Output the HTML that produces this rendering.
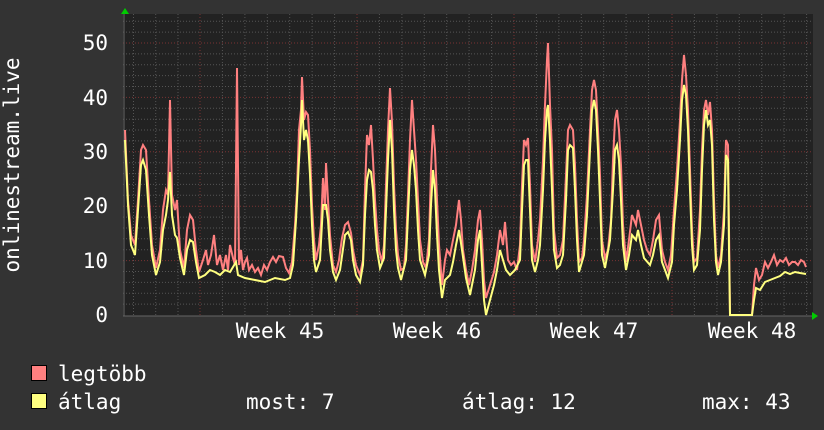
<!DOCTYPE html>
<html><head><meta charset="utf-8"><style>
html,body{margin:0;padding:0;background:#333;}
svg{display:block}
text{font-family:"DejaVu Sans Mono","Liberation Mono",monospace;font-size:21px;fill:#fff}
</style></head><body>
<svg width="824" height="430" viewBox="0 0 824 430" xmlns="http://www.w3.org/2000/svg">
<rect width="824" height="430" fill="#333"/>
<rect x="123" y="14" width="690" height="302" fill="#222"/>
<g stroke="#555" stroke-width="1" stroke-dasharray="1,2">
<path d="M123 304.1H811M123 293.2H811M123 282.4H811M123 271.5H811M123 249.7H811M123 238.8H811M123 228H811M123 217.1H811M123 195.3H811M123 184.4H811M123 173.6H811M123 162.7H811M123 140.9H811M123 130H811M123 119.2H811M123 108.3H811M123 86.5H811M123 75.6H811M123 64.8H811M123 53.9H811M123 32.1H811M123 21.2H811"/>
<path d="M133.5 14V316M155.7 14V316M178 14V316M222.4 14V316M244.9 14V316M267.3 14V316M289.7 14V316M312.1 14V316M334.6 14V316M379.4 14V316M401.9 14V316M424.3 14V316M446.7 14V316M469.1 14V316M491.6 14V316M536.4 14V316M558.9 14V316M581.3 14V316M603.7 14V316M626.1 14V316M648.6 14V316M694.4 14V316M716.9 14V316M739.3 14V316M761.7 14V316M784.1 14V316M806.6 14V316"/>
</g>
<g stroke="#7a3333" stroke-width="1" stroke-dasharray="1,2">
<path d="M123 260.6H811M123 206.2H811M123 151.8H811M123 97.4H811M123 43H811"/>
<path d="M200 14V316M357 14V316M514 14V316M672 14V316"/>
</g>
<path d="M123 316H814M124 12V316" stroke="#666" stroke-width="1"/>
<path d="M121 14L125 8L129 14Z" fill="#0c0"/>
<path d="M812 312L818 316L812 320Z" fill="#0c0"/>
<polyline fill="none" stroke="#ff8080" stroke-width="2" points="125,130 128,200 131,235 135,245 138,200 141,150 143,145 146,150 149,200 152,245 156,268 160,250 163,210 166,190 168,195 170,100 172,195 175,210 177,200 180,250 184,268 187,230 190,215 193,220 196,250 199,272 203,260 206,250 208,265 211,255 214,235 217,265 220,255 223,270 226,255 228,270 230,245 233,258 235,265 237,68 239,265 241,250 243,270 245,262 247,258 249,270 252,265 255,272 258,268 261,275 264,265 267,270 270,262 273,257 276,262 279,256 283,257 286,268 289,273 292,262 295,225 297,190 299,130 301,110 302,77 304,120 306,112 308,115 310,150 312,205 314,240 316,260 319,245 321,225 323,178 325,210 326,163 328,200 330,235 333,265 336,272 339,260 342,238 345,225 348,222 351,233 353,250 356,265 360,275 363,260 365,190 367,135 369,145 371,125 373,160 375,200 377,230 379,250 382,262 384,245 386,185 388,130 390,88 392,122 394,185 396,230 398,255 401,270 404,268 406,245 408,195 410,140 412,100 414,130 416,160 418,200 420,240 423,262 426,268 429,240 431,170 433,125 435,150 437,200 439,245 442,285 445,260 447,250 450,255 453,240 456,225 459,200 461,220 463,250 466,270 469,285 472,270 475,250 478,220 480,210 482,240 484,280 486,298 490,285 494,272 497,255 500,230 503,245 505,222 508,260 511,265 514,262 517,270 520,245 522,185 524,140 526,145 528,138 530,185 532,245 535,262 538,240 540,220 543,160 545,105 547,60 548,43 550,105 552,150 554,230 557,258 560,255 563,240 566,175 568,130 570,125 573,130 575,165 577,220 579,262 582,258 584,240 587,195 590,130 592,90 594,80 596,90 598,130 600,175 602,240 605,258 608,250 611,220 613,160 615,120 617,110 619,130 621,165 623,225 626,262 629,240 632,215 636,225 638,210 641,225 644,240 647,250 650,255 653,240 656,220 659,215 662,250 665,262 668,270 671,255 674,210 677,170 680,120 682,80 684,55 686,75 688,110 690,170 692,230 694,262 697,258 700,210 702,150 704,110 706,100 708,115 710,102 712,130 714,200 716,255 718,268 721,255 724,210 726,140 728,145 729,230 730,315 752,315 754,285 756,268 759,280 762,275 765,262 768,268 771,262 774,255 777,265 780,260 783,262 786,258 789,265 792,262 795,262 798,265 801,260 804,262 806,267"/>
<polyline fill="none" stroke="#ffff80" stroke-width="2" points="125,140 128,205 131,245 135,255 138,210 141,165 143,160 146,170 149,215 152,255 156,275 160,262 163,230 166,215 168,200 170,172 172,215 175,235 177,238 180,258 184,275 187,250 190,240 193,242 196,262 199,278 205,275 210,270 215,272 220,275 225,270 230,272 236,262 238,275 245,278 255,280 265,282 275,278 285,280 290,278 293,265 296,220 299,160 301,125 302,100 304,140 306,130 308,140 310,175 312,225 314,260 316,272 320,260 323,205 326,205 328,220 330,250 333,272 336,280 340,270 345,235 348,232 351,240 353,260 356,275 360,282 363,265 365,215 367,180 369,170 371,172 373,190 375,225 377,250 380,268 384,258 386,210 388,160 390,120 392,150 394,210 396,250 398,268 401,280 406,260 408,215 410,170 412,150 414,165 416,190 418,230 420,260 425,275 429,255 431,205 433,170 435,190 437,235 439,270 442,298 445,280 450,275 453,262 456,245 459,230 462,250 466,278 470,295 475,270 478,240 480,230 482,265 484,300 486,315 490,300 494,285 497,270 500,250 503,260 506,270 510,275 515,270 520,260 522,210 524,165 526,160 528,160 530,210 532,260 535,272 538,260 540,245 543,190 545,140 547,110 548,105 550,140 552,190 554,250 557,268 560,265 563,255 566,200 568,150 570,145 573,148 575,190 577,240 579,272 584,255 587,215 590,150 592,110 594,100 596,110 598,150 600,200 602,255 605,268 610,240 613,190 615,150 617,145 619,160 621,200 623,245 626,270 629,255 632,235 636,240 638,230 641,245 644,258 650,265 653,255 656,240 659,235 662,262 668,278 672,262 674,225 677,190 680,140 682,100 684,85 686,95 688,130 690,190 692,245 694,270 697,265 700,230 702,170 704,125 706,110 708,125 710,120 712,145 714,220 716,262 718,275 721,262 724,225 726,155 728,160 729,250 730,315 752,315 754,300 756,288 760,290 765,282 770,280 775,278 780,276 785,272 790,274 795,272 800,273 806,274"/>
<g text-anchor="end">
<text x="108" y="322">0</text>
<text x="108" y="268">10</text>
<text x="108" y="213">20</text>
<text x="108" y="159">30</text>
<text x="108" y="105">40</text>
<text x="108" y="50">50</text>
</g>
<g text-anchor="middle">
<text x="280" y="338">Week 45</text>
<text x="437" y="338">Week 46</text>
<text x="594" y="338">Week 47</text>
<text x="752" y="338">Week 48</text>
</g>
<text transform="translate(19,165) rotate(-90)" text-anchor="middle">onlinestream.live</text>
<rect x="31.5" y="365.5" width="15" height="15" fill="#ff8080" stroke="#000"/>
<rect x="31.5" y="393.5" width="15" height="15" fill="#ffff80" stroke="#000"/>
<text x="58" y="381">legtöbb</text>
<text x="58" y="409">átlag</text>
<text x="246" y="409">most: 7</text>
<text x="462" y="409">átlag: 12</text>
<text x="702" y="409">max: 43</text>
</svg>
</body></html>
